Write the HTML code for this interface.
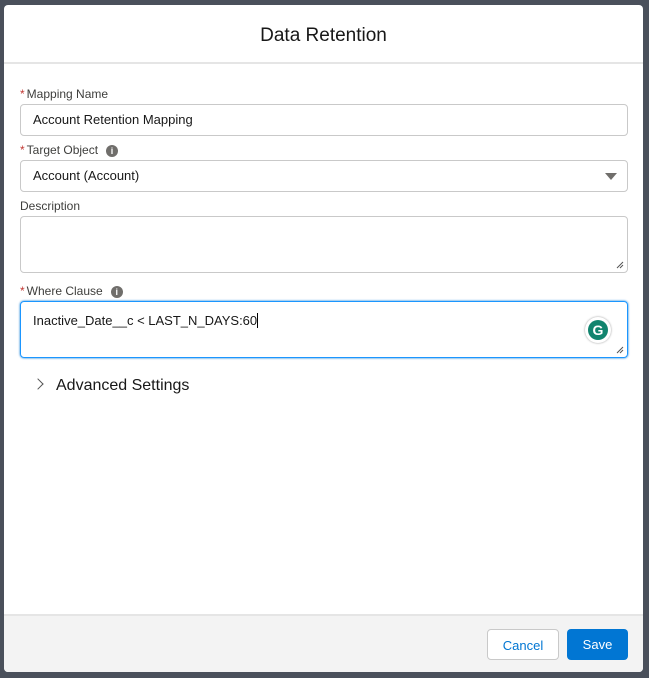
<!DOCTYPE html><html><head><style>
body{margin:0;width:649px;height:678px;background:#4a505b;font-family:"Liberation Sans",sans-serif;position:relative;overflow:hidden}
.m{position:absolute;left:4px;top:5px;width:639px;height:667px;background:#fff;border-radius:4px;overflow:hidden}
.h{height:57px;border-bottom:2px solid #e5e5e5;text-align:center;line-height:62px;font-size:19px;color:#181818}
.lbl{position:absolute;left:16px;font-size:12px;color:#3e3e3c}
.lbl b{color:#c23934;font-weight:normal;margin-right:2px}
.inp{position:absolute;left:16px;width:608px;border:1px solid #c9c9c9;border-radius:4px;font-size:13px;color:#181818;box-sizing:border-box;padding-left:12px}
.i{display:inline-block;width:12px;height:12px;border-radius:50%;background:#706e6b;color:#fff;font-size:9px;font-weight:bold;text-align:center;line-height:12px;margin-left:8px;vertical-align:0}
.f{position:absolute;left:0;top:609px;width:639px;height:58px;background:#f3f3f3;border-top:2px solid #e5e5e5}
.btn{position:absolute;top:13px;height:31px;border-radius:4px;font-size:13px;line-height:31px;text-align:center;box-sizing:border-box}
.rs{position:absolute;right:3px;bottom:3px;width:8px;height:8px}
</style></head><body><div class="m">
<div class="h">Data Retention</div>
<div class="lbl" style="top:82px"><b>*</b>Mapping Name</div>
<div class="inp" style="top:99px;height:32px;line-height:30px">Account Retention Mapping</div>
<div class="lbl" style="top:138px"><b>*</b>Target Object<span class="i">i</span></div>
<div class="inp" style="top:155px;height:32px;line-height:30px">Account (Account)<span style="position:absolute;right:10px;top:12px;border-left:6px solid transparent;border-right:6px solid transparent;border-top:7px solid #706e6b"></span></div>
<div class="lbl" style="top:194px">Description</div>
<div class="inp" style="top:211px;height:57px"><svg class="rs" viewBox="0 0 8 8"><path d="M1 7L7 1M4 7L7 4" stroke="#555" stroke-width="1"/></svg></div>
<div class="lbl" style="top:279px"><b>*</b>Where Clause<span class="i">i</span></div>
<div class="inp" style="top:296px;height:57px;border-color:#1b96ff;box-shadow:0 0 2px #0176d3;padding-top:11px">Inactive_Date__c &lt; LAST_N_DAYS:60<span style="display:inline-block;width:1px;height:15px;background:#000;vertical-align:-3px"></span>
<div style="position:absolute;right:16px;top:15px;width:26px;height:26px;border-radius:50%;background:#fff;box-shadow:0 0 2px #999"><div style="margin:3px;width:20px;height:20px;border-radius:50%;background:#11846e;color:#fff;font-weight:bold;font-size:14px;text-align:center;line-height:20px">G</div></div>
<svg class="rs" viewBox="0 0 8 8"><path d="M1 7L7 1M4 7L7 4" stroke="#555" stroke-width="1"/></svg></div>
<div style="position:absolute;left:30px;top:372px;font-size:16px;color:#181818"><span style="display:inline-block;width:7px;height:7px;border-right:1.5px solid #555;border-top:1.5px solid #555;transform:rotate(45deg);margin-right:14px;vertical-align:2px"></span>Advanced Settings</div>
<div class="f">
<div class="btn" style="left:483px;width:72px;border:1px solid #c9c9c9;background:#fff;color:#0176d3">Cancel</div>
<div class="btn" style="left:563px;width:61px;background:#0176d3;color:#fff">Save</div>
</div></div></body></html>
